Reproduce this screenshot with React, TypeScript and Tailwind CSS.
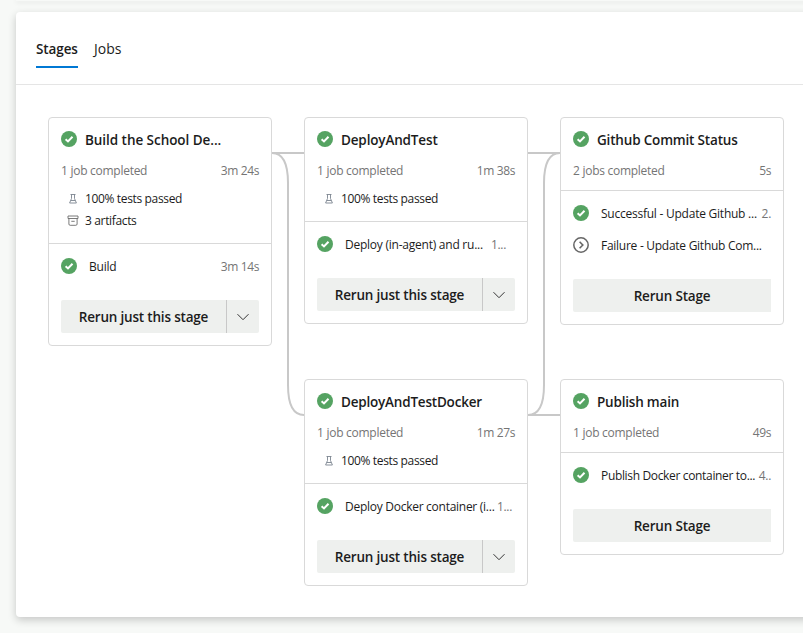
import type { ReactNode } from "react";

function Success() {
  return (
    <svg width="16" height="16" viewBox="0 0 16 16" className="shrink-0">
      <circle cx="8" cy="8" r="8" fill="#55a362" />
      <path d="M4.6 8.2 L7 10.4 L11.5 5.7" fill="none" stroke="#fff" strokeWidth="2" />
    </svg>
  );
}

function Skipped() {
  return (
    <svg width="16" height="16" viewBox="0 0 16 16" className="shrink-0" fill="none" stroke="#666">
      <circle cx="8" cy="8" r="7.2" strokeWidth="1.5" />
      <path d="M6.6 4.8 L9.8 8 L6.6 11.2" strokeWidth="1.6" />
    </svg>
  );
}

function Flask() {
  return (
    <svg width="12" height="12" viewBox="0 0 12 12" className="shrink-0" fill="none" stroke="#7c8590">
      <path d="M3.5 1.5 H8.5 M4.5 1.5 V5.5 L2.6 10 H9.4 L7.5 5.5 V1.5 M3.8 7.5 H8.2" strokeWidth="0.9" />
    </svg>
  );
}

function Archive() {
  return (
    <svg width="12" height="12" viewBox="0 0 12 12" className="shrink-0" fill="none" stroke="#6c6c6c">
      <path d="M1 1 H11 V3.5 H1 Z M1.9 3.5 V9 Q1.9 10.3 3.2 10.3 H8.8 Q10.1 10.3 10.1 9 V3.5 M4.3 6.3 H7.7" strokeWidth="0.9" />
    </svg>
  );
}

function Detail({ icon, children }: { icon: ReactNode; children: ReactNode }) {
  return (
    <div className="flex h-[22px] items-center gap-1.5 pl-1.5 text-[12px] tracking-[-0.35px] text-[#1c1c1c]">
      {icon}
      <span>{children}</span>
    </div>
  );
}

interface JobProps {
  icon?: ReactNode;
  time?: string;
  timeClass?: string;
  tracking?: string;
  children: ReactNode;
}

function Job({ icon = <Success />, time, timeClass = "", tracking = "tracking-[-0.24px]", children }: JobProps) {
  return (
    <div className="flex h-8 items-center text-[12px] whitespace-nowrap text-[#1c1c1c]">
      {icon}
      <span className={`ml-3 grow pt-0.5 ${tracking}`}>{children}</span>
      <span className={`pt-0.5 tracking-[-0.3px] text-[#757575] ${timeClass}`}>{time}</span>
    </div>
  );
}

interface StageProps {
  title: string;
  titleTracking?: string;
  summary: string;
  time: string;
  details?: ReactNode;
  split?: boolean;
  children: ReactNode;
}

function Stage({ title, titleTracking = "tracking-[-0.2px]", summary, time, details, split, children }: StageProps) {
  return (
    <section className="w-56 rounded-[4px] border border-[#d9d9d9] bg-white">
      <header className={`border-b border-[#d9d9d9] px-3 pt-2.5 ${details ? "pb-[11px]" : "pb-0.5"}`}>
        <div className="flex h-[22px] items-center gap-2 text-[13.5px]/[19px] font-semibold whitespace-nowrap text-[#1c1c1c]">
          <Success />
          <span className={`pt-[3px] ${titleTracking}`}>{title}</span>
        </div>
        <div className="mt-[11px] mb-2 flex h-[19px] items-center justify-between text-[12px] tracking-[-0.27px] text-[#757575]">
          <span>{summary}</span>
          <span className="tracking-[-0.4px]">{time}</span>
        </div>
        {details}
      </header>
      <div className="px-3 pt-1.5 pb-3">
        {children}
        <div className="mt-[18px] flex h-[33px] text-[13.5px] font-semibold text-[#1c1c1c]">
          <button className="grow rounded-l-[2px] bg-[#eef0ee] pt-0.5 tracking-[-0.19px]">
            {split ? "Rerun just this stage" : "Rerun Stage"}
          </button>
          {split && (
            <button className="flex w-[33px] items-center justify-center rounded-r-[2px] border-l border-[#c8c8c8] bg-[#eef0ee]">
              <svg width="12" height="8" viewBox="0 0 12 8" fill="none" stroke="#333">
                <path d="M0.5 1.2 L6 6.7 L11.5 1.2" />
              </svg>
            </button>
          )}
        </div>
      </div>
    </section>
  );
}

function Connector({ d }: { d: string }) {
  return (
    <svg width="32" height="300" viewBox="0 0 32 300" className="shrink-0" fill="none" stroke="#c8c8c8" strokeWidth="2">
      <path d={d} />
    </svg>
  );
}

export default function App() {
  return (
    <div className="h-[633px] w-[803px] overflow-hidden bg-[#f7f9f7] pl-4 font-['Open_Sans','Noto_Sans',sans-serif]">
      <div className="h-px w-[830px] shadow-[0_1px_5px_rgba(0,0,0,0.2)]" />
      <main className="mt-[11px] h-[605px] w-[830px] rounded-[4px] bg-white shadow-[0_3px_8px_rgba(0,0,0,0.2)]">
        <nav className="flex h-[73px] gap-4 border-b border-[#e5e5e5] pt-[26px] pl-5 text-[14px] text-[#1c1c1c]">
          <span className="h-[30px] w-[42px] border-b-2 border-[#0078d4] text-[13.5px]/[23px] font-semibold tracking-[-0.1px] whitespace-nowrap">
            Stages
          </span>
          <span>Jobs</span>
        </nav>
        <div className="flex items-start pt-8 pl-8">
          <Stage
            title="Build the School De..."
            titleTracking="tracking-[-0.05px]"
            summary="1 job completed"
            time="3m 24s"
            split
            details={
              <>
                <Detail icon={<Flask />}>100% tests passed</Detail>
                <Detail icon={<Archive />}>3 artifacts</Detail>
              </>
            }
          >
            <Job time="3m 14s" timeClass="tracking-[-0.4px]">Build</Job>
          </Stage>
          <Connector d="M0 36 H32 M0 36 C12 36 16 48 16 66 V268 C16 286 20 298 32 298" />
          <div className="flex flex-col gap-[55px]">
            <Stage
              title="DeployAndTest"
              titleTracking="tracking-[-0.15px]"
              summary="1 job completed"
              time="1m 38s"
              split
              details={<Detail icon={<Flask />}>100% tests passed</Detail>}
            >
              <Job time="1..." timeClass="mr-[9px]">Deploy (in-agent) and ru...</Job>
            </Stage>
            <Stage
              title="DeployAndTestDocker"
              summary="1 job completed"
              time="1m 27s"
              split
              details={<Detail icon={<Flask />}>100% tests passed</Detail>}
            >
              <Job time="1..." timeClass="mr-[3px]" tracking="tracking-[-0.27px]">Deploy Docker container (i...</Job>
            </Stage>
          </div>
          <Connector d="M0 36 H32 M32 36 C20 36 16 48 16 66 V268 C16 286 12 298 0 298 H32" />
          <div className="flex flex-col gap-[54px]">
            <Stage title="Github Commit Status" titleTracking="tracking-[-0.18px]" summary="2 jobs completed" time="5s">
              <Job time="2.">Successful - Update Github ...</Job>
              <Job icon={<Skipped />} tracking="tracking-[-0.27px]">Failure - Update Github Com...</Job>
            </Stage>
            <Stage title="Publish main" summary="1 job completed" time="49s">
              <Job time="4.." tracking="tracking-[-0.34px]">Publish Docker container to...</Job>
            </Stage>
          </div>
        </div>
      </main>
    </div>
  );
}
